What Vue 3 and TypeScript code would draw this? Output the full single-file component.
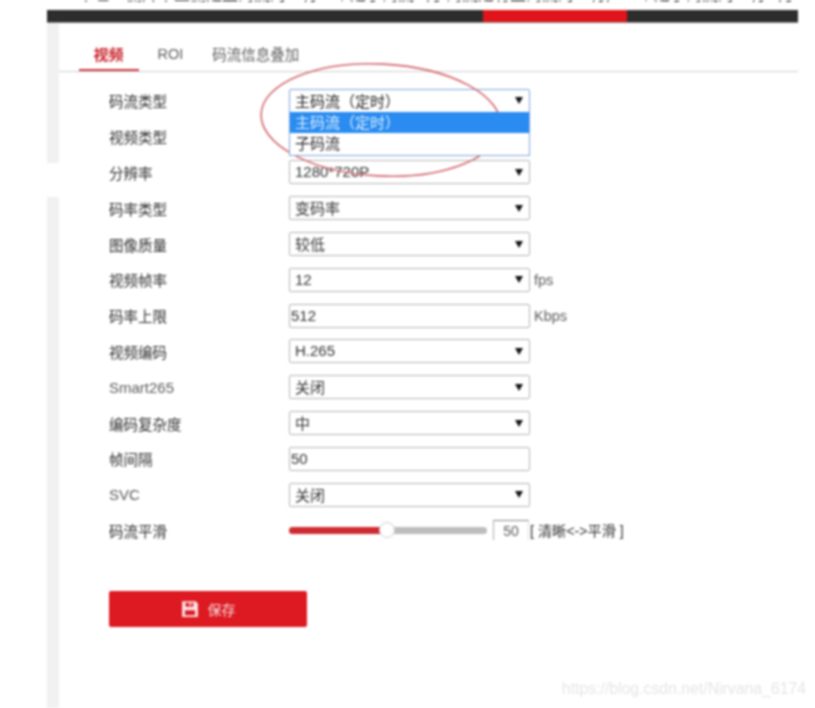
<script setup lang="ts">
interface Row {
  label: string
  kind: 'select' | 'input'
  value?: string
  unit?: string
  active?: boolean
  latin?: boolean
}
const rows: Row[] = [
  { label: '码流类型', kind: 'select', value: '主码流（定时）', active: true },
  { label: '视频类型', kind: 'select' },
  { label: '分辨率', kind: 'select', value: '1280*720P' },
  { label: '码率类型', kind: 'select', value: '变码率' },
  { label: '图像质量', kind: 'select', value: '较低' },
  { label: '视频帧率', kind: 'select', value: '12', unit: 'fps' },
  { label: '码率上限', kind: 'input', value: '512', unit: 'Kbps' },
  { label: '视频编码', kind: 'select', value: 'H.265' },
  { label: 'Smart265', kind: 'select', value: '关闭', latin: true },
  { label: '编码复杂度', kind: 'select', value: '中' },
  { label: '帧间隔', kind: 'input', value: '50' },
  { label: 'SVC', kind: 'select', value: '关闭', latin: true },
]
</script>

<template>
  <div class="page">
    <div class="topline">中也一侧片中上侧是主码流的一行一个是子码流（子码流是有主码流的一行）一个是子码流的一行（子码</div>
    <div class="shell">
      <div class="topbar"><span class="topbar-red"></span></div>
      <div class="body">
        <div class="strip">
          <div class="strip-a"></div>
          <div class="strip-b"></div>
        </div>
        <main class="panel">
          <nav class="tabs">
            <span class="tab tab-on">视频</span>
            <span class="tab tab-roi">ROI</span>
            <span class="tab">码流信息叠加</span>
          </nav>
          <div class="form">
            <div v-for="r in rows" :key="r.label" class="row">
              <span class="label" :class="{ latin: r.latin }">{{ r.label }}</span>
              <div class="field" :class="{ 'field-input': r.kind === 'input', 'field-active': r.active }">
                <span class="value">{{ r.value }}</span>
                <i v-if="r.kind === 'select'" class="caret"></i>
                <div v-if="r.active" class="menu">
                  <div class="opt opt-on">主码流（定时）</div>
                  <div class="opt">子码流</div>
                </div>
              </div>
              <span v-if="r.unit" class="unit">{{ r.unit }}</span>
            </div>
            <div class="row">
              <span class="label">码流平滑</span>
              <div class="slider">
                <div class="track"><div class="fill"></div><div class="thumb"></div></div>
              </div>
              <span class="num">50</span>
              <span class="hint">[ 清晰&lt;-&gt;平滑 ]</span>
            </div>
          </div>
          <button class="save" type="button">
            <svg class="disk" width="18" height="18" viewBox="0 0 16 16">
              <path fill="#fbe9e9" fill-rule="evenodd" d="M1 1h12l2 2v12H1zM4 2.500V6h7V2.500H9V5H7.500V2.500zM3.500 9v4.500h9V9z" />
            </svg>
            <span>保存</span>
          </button>
        </main>
      </div>
    </div>
    <svg class="ring" width="250" height="124" viewBox="0 0 250 124">
      <ellipse cx="125" cy="62" rx="120" ry="56" transform="rotate(3 125 62)" fill="none" stroke="#d4656a" stroke-width="1.600" />
    </svg>
    <div class="mark">https://blog.csdn.net/Nirvana_6174</div>
  </div>
</template>

<style scoped>
.page {
  position: relative;
  width: 815px;
  height: 708px;
  overflow: hidden;
  background: #fff;
  font-family: "Liberation Sans", "Noto Sans CJK SC", sans-serif;
  font-size: 14.5px;
  color: #444;
  filter: blur(0.8px);
}
.topline {
  width: 720px;
  height: 18px;
  margin-top: -8px;
  margin-left: 78px;
  font-size: 16px;
  line-height: 6px;
  color: #222;
  white-space: nowrap;
  overflow: hidden;
}
.shell {
  margin-left: 47px;
  width: 751px;
}
.topbar {
  height: 13px;
  padding-left: 436px;
  background: #2d2d2d;
  border-bottom: 1px solid #8a8a8a;
  box-sizing: border-box;
}
.topbar-red {
  display: block;
  width: 144px;
  height: 12px;
  background: #e1141b;
}
.body {
  display: flex;
}
.strip {
  width: 12px;
  flex: none;
  display: flex;
  flex-direction: column;
}
.strip-a {
  height: 140px;
  background: #f1f1f1;
}
.strip-b {
  margin-top: 34px;
  flex: 1;
  background: #f1f1f1;
}
.panel {
  flex: 1;
  height: 685px;
}
.tabs {
  display: flex;
  height: 39px;
  padding-left: 20px;
  gap: 19px;
  box-sizing: border-box;
  border-bottom: 1px solid #d0d0d0;
  margin-top: 10px;
  color: #5e5e5e;
}
.tab {
  position: relative;
  display: flex;
  align-items: center;
  padding-top: 3px;
}
.tab-roi {
  margin-right: 10px;
}
.tab-on {
  padding-left: 14.500px;
  padding-right: 15px;
  color: #c8232c;
  font-size: 15px;
  font-weight: 700;
}
.tab-on::after {
  content: "";
  position: absolute;
  left: 0;
  right: 0;
  bottom: 0;
  height: 2px;
  background: #cc3a40;
}
.form {
  padding: 11px 0 0 50px;
}
.row {
  display: flex;
  align-items: center;
  height: 35.800px;
}
.label {
  width: 180px;
  flex: none;
  color: #2e2e2e;
}
.latin {
  color: #5a5a5a;
  font-size: 15px;
}
.field {
  position: relative;
  width: 241px;
  height: 24px;
  flex: none;
  box-sizing: border-box;
  padding: 0 6px 0 5px;
  border: 1px solid #b4b4b4;
  border-radius: 2px;
  display: flex;
  align-items: center;
  justify-content: space-between;
  color: #333;
  font-size: 15px;
}
.value {
  padding-bottom: 1px;
}
.field-input {
  padding-left: 1px;
}
.field-active {
  border-color: #7fa4de;
  color: #222;
}
.caret {
  width: 0;
  height: 0;
  border-left: 4px solid transparent;
  border-right: 4px solid transparent;
  border-top: 7px solid #111;
}
.menu {
  position: absolute;
  left: -1px;
  top: 22px;
  width: 241px;
  box-sizing: border-box;
  border: 1px solid #7fa4de;
  border-top: none;
  background: #fff;
  z-index: 2;
}
.opt {
  height: 21.500px;
  line-height: 21.500px;
  padding-left: 5px;
  color: #2a2a2a;
}
.opt-on {
  background: #2a8cf0;
  color: #dbeeff;
}
.unit {
  margin-left: 4px;
  color: #5a5a5a;
  font-size: 14.500px;
}
.slider {
  width: 198px;
  flex: none;
}
.track {
  position: relative;
  height: 7px;
  border-radius: 3.500px;
  background: #bdbdbd;
}
.fill {
  width: 92px;
  height: 7px;
  border-radius: 3.500px 0 0 3.500px;
  background: #cf2a32;
}
.thumb {
  position: absolute;
  left: 90px;
  top: -4.500px;
  width: 16px;
  height: 16px;
  box-sizing: border-box;
  border-radius: 50%;
  background: #fff;
  border: 1px solid #d0d0d0;
}
.num {
  width: 36px;
  height: 20px;
  line-height: 20px;
  margin-left: 6px;
  flex: none;
  text-align: center;
  box-sizing: border-box;
  border-top: 1px solid #888;
  border-left: 1px solid #aaa;
  border-right: 1px solid #ddd;
  color: #5a5a5a;
  font-size: 14px;
}
.hint {
  margin-left: 1px;
  font-size: 14.200px;
  color: #2e2e2e;
  white-space: nowrap;
}
.save {
  display: flex;
  align-items: center;
  justify-content: center;
  gap: 9px;
  width: 198px;
  height: 36px;
  margin: 42.500px 0 0 50px;
  border: none;
  border-radius: 2px;
  background: #dd1a22;
  color: #f6d9da;
  font-family: inherit;
  font-size: 14px;
}
.ring {
  position: absolute;
  left: 256px;
  top: 58px;
}
.mark {
  position: absolute;
  right: 9px;
  top: 680px;
  color: #e6e6e6;
  font-size: 15.800px;
}
</style>
